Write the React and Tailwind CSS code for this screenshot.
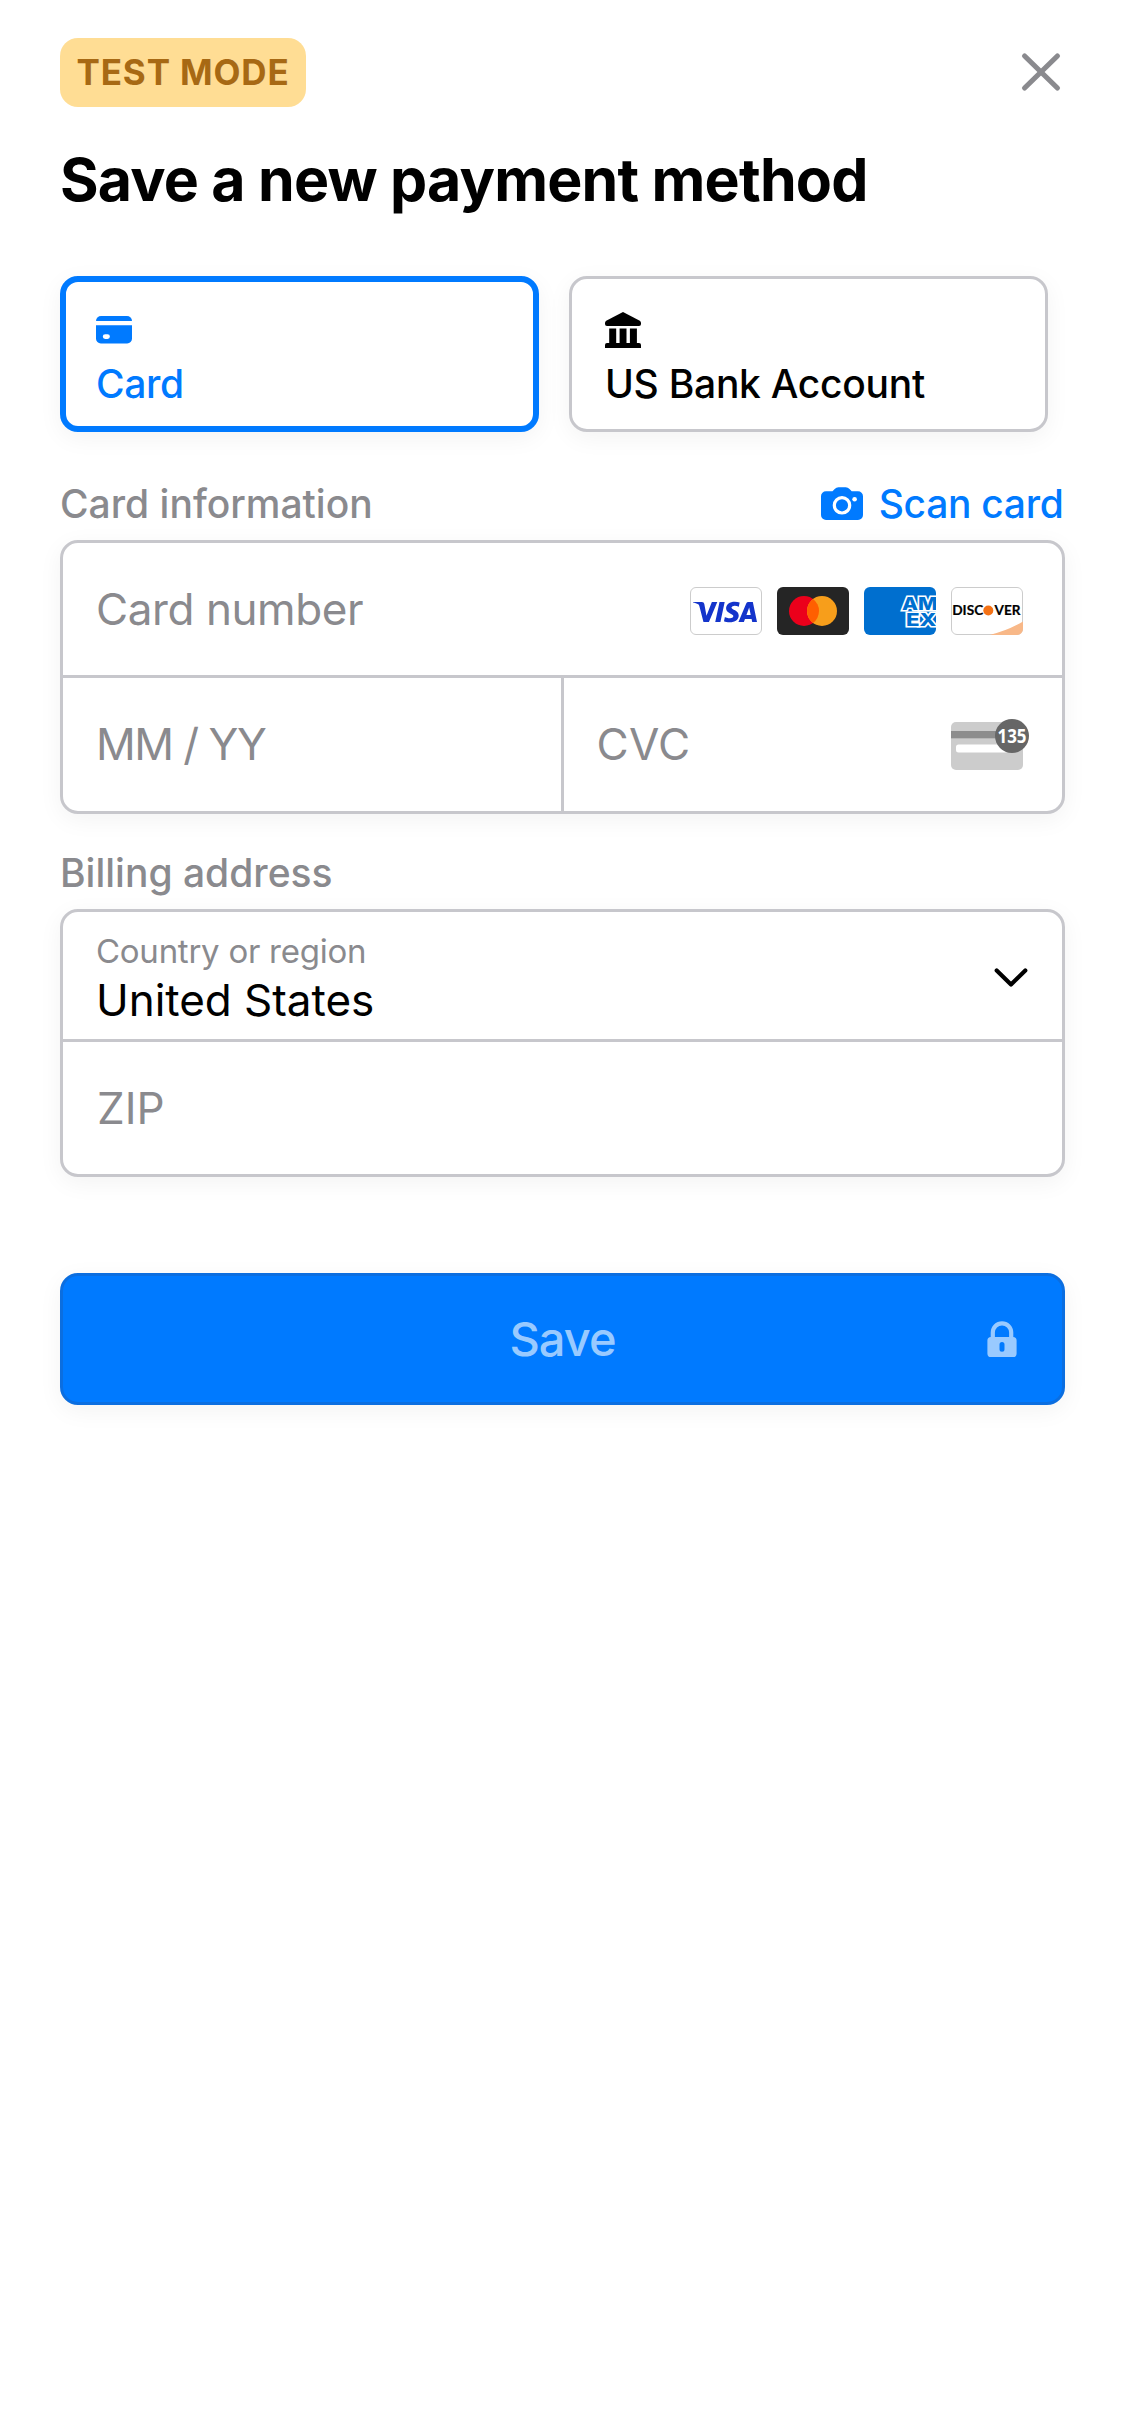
import { SiVisa } from "react-icons/si";

const SHADOW = "shadow-[0_6px_24px_rgba(0,0,0,0.05)]";

function CloseIcon() {
  return (
    <svg className="-mt-px" width="48" height="48" viewBox="0 0 48 48" fill="none" stroke="#8a8a8e" strokeWidth="5.2" strokeLinecap="round">
      <path d="M7.6 8 40.400 40M40.400 8 7.600 40" />
    </svg>
  );
}

function CardIcon() {
  return (
    <svg width="36" height="36" viewBox="0 0 36 36" fill="#007aff">
      <path d="M0 9a5 5 0 0 1 5-5h26a5 5 0 0 1 5 5z" />
      <path
        fillRule="evenodd"
        d="M0 13.3h36v13.4a4.8 4.8 0 0 1-4.8 4.8H4.8A4.8 4.8 0 0 1 0 26.700zM9.200 22.200a2.300 2.300 0 0 0 0 4.800h2.300a2.300 2.300 0 0 0 0-4.800z"
      />
    </svg>
  );
}

function BankIcon() {
  return (
    <svg width="36" height="36" viewBox="0 0 36 36" fill="#000">
      <path d="M18 0 34.800 8.800Q36 9.600 36 10.800V12Q36 14 34 14H2Q0 14 0 12V10.800Q0 9.600 1.200 8.800z" />
      <path d="M4.200 16.600h7V31h3.400V16.600h6.900V31h3.400V16.600h7V31H34q2 0 2 2v3H0v-3q0-2 2-2h2.200z" />
    </svg>
  );
}

function CameraIcon() {
  return (
    <svg width="42" height="34" viewBox="0 0 42 34">
      <path
        d="M5 4.300h6.500l2.200-2.400Q15.300.200 17.500.200h7.200q2.200 0 3.800 1.700l2.200 2.400H37a5 5 0 0 1 5 5V28a5 5 0 0 1-5 5H5a5 5 0 0 1-5-5V9.300a5 5 0 0 1 5-5z"
        fill="#007aff"
      />
      <circle cx="21" cy="18.300" r="7.700" fill="none" stroke="#fff" strokeWidth="3.200" />
      <circle cx="33.600" cy="12.300" r="2.300" fill="#fff" />
    </svg>
  );
}

function Mastercard() {
  return (
    <svg width="72" height="48" viewBox="0 0 72 48">
      <rect width="72" height="48" rx="6" fill="#252525" />
      <circle cx="27" cy="24" r="15" fill="#eb001b" />
      <circle cx="45" cy="24" r="15" fill="#f79e1b" />
      <path d="M36 12a15 15 0 0 1 0 24 15 15 0 0 1 0-24z" fill="#ff5f00" />
    </svg>
  );
}

function Amex() {
  return (
    <svg width="72" height="48" viewBox="0 0 72 48">
      <clipPath id="amex-card">
        <rect width="72" height="48" rx="6" />
      </clipPath>
      <g clipPath="url(#amex-card)">
        <rect width="72" height="48" fill="#006fcf" />
        <g
          fontFamily="Inter, sans-serif"
          fontWeight="800"
          fontSize="18"
          fill="#006fcf"
          stroke="#fff"
          strokeWidth="3"
          paintOrder="stroke"
        >
          <text x="38" y="23" textLength="35.500" lengthAdjust="spacingAndGlyphs">AM</text>
          <text x="42" y="38.700" textLength="30.500" lengthAdjust="spacingAndGlyphs">EX</text>
        </g>
      </g>
    </svg>
  );
}

function Discover() {
  return (
    <svg width="72" height="48" viewBox="0 0 72 48">
      <rect x=".5" y=".5" width="71" height="47" rx="5.500" fill="#fff" stroke="#ccc" />
      <path d="M72 34.500V42a6 6 0 0 1-6 6H38.500Q57 43.500 72 34.500z" fill="#f8b888" />
      <g fontFamily="Lato, sans-serif" fontWeight="700" fontSize="12.800" fill="#000" stroke="#000" strokeWidth=".2">
        <text x="1.200" y="28.100" textLength="31" lengthAdjust="spacingAndGlyphs">DISC</text>
        <text x="43.500" y="28.100" textLength="26" lengthAdjust="spacingAndGlyphs">VER</text>
      </g>
      <circle cx="37.300" cy="23.500" r="5" fill="#f47216" />
    </svg>
  );
}

function CvcIcon() {
  return (
    <svg className="mt-[3px]" width="78" height="54" viewBox="0 0 78 54">
      <rect y="3" width="72" height="48" rx="5" fill="#ccc" />
      <rect y="12" width="72" height="7.300" fill="#8d8d8d" />
      <rect x="5" y="25.500" width="52" height="8" rx="2.500" fill="#fff" />
      <circle cx="61" cy="17" r="17" fill="#666" />
      <text
        x="46.500"
        y="23.700"
        fontFamily="'Open Sans', sans-serif"
        fontWeight="700"
        fontSize="19"
        fill="#fff"
        textLength="29"
        lengthAdjust="spacingAndGlyphs"
      >
        135
      </text>
    </svg>
  );
}

function LockIcon() {
  return (
    <svg width="30" height="36" viewBox="0 0 30 36">
      <path d="M5.800 17v-5.500a9.200 9.200 0 0 1 18.400 0V17" fill="none" stroke="#99caff" strokeWidth="4.200" />
      <path
        fillRule="evenodd"
        fill="#99caff"
        d="M4 16h22a3.600 3.600 0 0 1 3.600 3.600V32.400A3.600 3.600 0 0 1 26 36H4A3.600 3.600 0 0 1 .4 32.400V19.600A3.600 3.600 0 0 1 4 16zM15 21a2.500 2.500 0 0 0-2.500 2.500v4.800a2.500 2.500 0 0 0 5 0v-4.800A2.500 2.500 0 0 0 15 21z"
      />
    </svg>
  );
}

export default function App() {
  return (
    <main className="min-h-[2436px] w-[1125px] bg-white px-[60px] pt-[38px] font-['Inter',sans-serif] text-black">
      <header className="flex h-[69px] items-center justify-between">
        <span className="flex h-[69px] w-[246px] items-center rounded-[18px] bg-[#ffdd94] pl-[16.500px] text-[35px] font-bold tracking-[0.870px] whitespace-nowrap text-[#a76914]">
          TEST MODE
        </span>
        <button aria-label="Close">
          <CloseIcon />
        </button>
      </header>

      <h1 className="mt-[42px] text-[59px] leading-[61px] font-bold tracking-[-0.790px] whitespace-nowrap">
        Save a new payment method
      </h1>

      <div className="mt-[66px] flex gap-[30px]">
        <button className={`flex h-[156px] w-[479px] flex-col items-start rounded-[18px] border-[6px] border-[#007aff] bg-white pt-[30px] pl-[30px] text-[#007aff] ${SHADOW}`}>
          <CardIcon />
          <span className="mt-[16px] text-[39px] leading-[40px] font-medium tracking-[-0.363px]">Card</span>
        </button>
        <button className={`flex h-[156px] w-[479px] flex-col items-start rounded-[18px] border-[3px] border-[#c7c7cc] bg-white pt-[33px] pl-[33px] ${SHADOW}`}>
          <BankIcon />
          <span className="mt-[16px] text-[39px] leading-[40px] font-medium tracking-[-0.266px]">US Bank Account</span>
        </button>
      </div>

      <div className="mt-[52px] flex h-[40px] items-center justify-between pr-[1.500px] text-[39px] leading-[40px] font-medium">
        <span className="text-[#8a8a8e]">Card information</span>
        <button className="flex items-center gap-[16px] tracking-[-0.308px] text-[#007aff]">
          <CameraIcon />
          Scan card
        </button>
      </div>
      <section className={`mt-[16px] h-[274px] rounded-[18px] border-[3px] border-[#c7c7cc] bg-white text-[44px] text-[#8a8a8e] ${SHADOW}`}>
        <div className="flex h-[135px] items-center justify-between border-b-[3px] border-[#c7c7cc] pr-[39px] pl-[33px]">
          <span className="tracking-[-0.415px]">Card number</span>
          <div className="mt-[4px] flex gap-[15px]">
            <span className="flex h-[48px] w-[72px] items-center justify-center rounded-[6px] border border-[#ccc] bg-white">
              <SiVisa className="mt-[2px] -ml-[2px]" size={64} color="#1434cb" preserveAspectRatio="none" />
            </span>
            <Mastercard />
            <Amex />
            <Discover />
          </div>
        </div>
        <div className="flex h-[133px]">
          <div className="flex w-[501px] items-center border-r-[3px] border-[#c7c7cc] pb-[2px] pl-[33px] tracking-[-1.500px]">MM / YY</div>
          <div className="flex flex-1 items-center justify-between pr-[33px] pl-[32.500px]">
            <span className="pb-[2px] tracking-[0.242px]">CVC</span>
            <CvcIcon />
          </div>
        </div>
      </section>

      <h2 className="mt-[39px] text-[39px] leading-[40px] font-medium text-[#8a8a8e]">Billing address</h2>
      <section className={`mt-[16px] h-[268px] rounded-[18px] border-[3px] border-[#c7c7cc] bg-white ${SHADOW}`}>
        <div className="flex h-[130px] items-start justify-between border-b-[3px] border-[#c7c7cc] pt-[19px] pr-[34px] pl-[33px]">
          <div className="flex flex-col">
            <span className="text-[33px] leading-[40px] tracking-[-0.260px] text-[#8a8a8e]">Country or region</span>
            <span className="mt-[7px] text-[44px] leading-[44px] tracking-[-0.041px]">United States</span>
          </div>
          <svg className="mt-[36px]" width="34" height="22" viewBox="0 0 34 22" fill="none" stroke="#000" strokeWidth="4.200" strokeLinecap="round" strokeLinejoin="round">
            <path d="M2.700 3.500 17 17.500 31.300 3.500" />
          </svg>
        </div>
        <div className="flex h-[132px] items-center pl-[34px] text-[44px] text-[#8a8a8e]">ZIP</div>
      </section>

      <button className={`mt-[96px] grid h-[132px] w-full grid-cols-[1fr_auto_1fr] items-center rounded-[18px] border-[3px] border-[#0b6ee0] bg-[#007aff] pr-[45px] pl-[45px] text-[47px] font-medium tracking-[-1px] text-[#99caff] ${SHADOW}`}>
        <span />
        <span>Save</span>
        <span className="justify-self-end">
          <LockIcon />
        </span>
      </button>
    </main>
  );
}
